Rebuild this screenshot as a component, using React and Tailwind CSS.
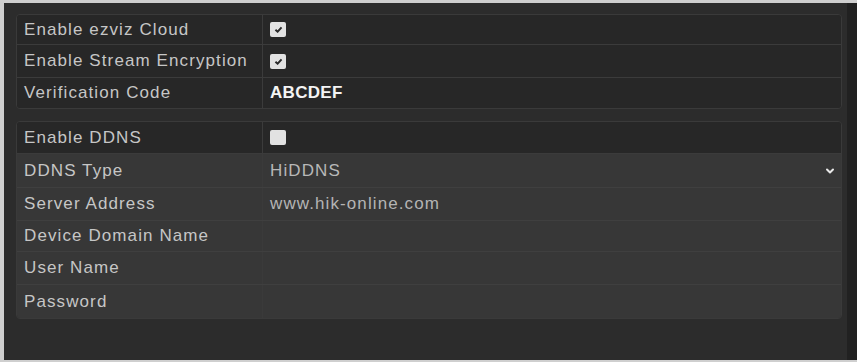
import { ChevronDown } from "lucide-react";

const Check = ({ checked }) => (
  <div className="w-[16px] h-[15px] bg-[#e2e2e2] rounded-[2px] flex items-center justify-center">
    {checked && (
      <svg width="9" height="7" viewBox="0 0 10 8">
        <path d="M1.5 4.2 L4 6.5 L8.5 1.5" fill="none" stroke="#2a2a2a" strokeWidth="2.2" />
      </svg>
    )}
  </div>
);

const Row = ({ label, children, h, dark, last }) => (
  <div
    className={`flex ${h} ${dark ? "bg-[#272727]" : "bg-[#373737]"} ${
      last ? "" : dark ? "border-b border-[#3b3b3b]" : "border-b border-[#3f3f3f]"
    }`}
  >
    <div
      className={`w-[246px] shrink-0 flex items-center pl-[7px] border-r ${
        dark ? "border-[#3b3b3b]" : "border-[#3a3a3a]"
      } text-[#c6c6c6]`}
    >
      {label}
    </div>
    <div className="flex-1 flex items-center pl-[7px] pr-[5px]">{children}</div>
  </div>
);

export default function App() {
  return (
    <div className="w-[857px] h-[362px] bg-[#cfcfcf] pt-[3px] pl-[4px] pb-[2px] flex text-[17px] leading-[20px] tracking-[1.1px] font-['Liberation_Sans',Arial,sans-serif]">
      <div className="w-[843px] bg-[#2c2c2c] pl-[12px] pt-[11px]">
        {/* cloud settings */}
        <div className="w-[826px] rounded-[4px] border border-[#3a3a3a] overflow-hidden">
          <Row label="Enable ezviz Cloud" h="h-[30px]" dark>
            <Check checked />
          </Row>
          <Row label="Enable Stream Encryption" h="h-[33px]" dark>
            <Check checked />
          </Row>
          <Row label="Verification Code" h="h-[30px]" dark last>
            <span className="text-[#f4f4f4] font-bold tracking-[0.3px]">ABCDEF</span>
          </Row>
        </div>

        {/* ddns settings */}
        <div className="w-[826px] mt-[12px] rounded-[4px] border border-[#3a3a3a] overflow-hidden">
          <Row label="Enable DDNS" h="h-[32px]" dark>
            <Check />
          </Row>
          <Row label="DDNS Type" h="h-[34px]">
            <span className="flex-1 text-[#b8b8b8]">HiDDNS</span>
            <ChevronDown size={12} strokeWidth={4} color="#e8e8e8" />
          </Row>
          <Row label="Server Address" h="h-[33px]">
            <span className="text-[#b4b4b4]">www.hik-online.com</span>
          </Row>
          <Row label="Device Domain Name" h="h-[31px]" />
          <Row label="User Name" h="h-[33px]" />
          <Row label="Password" h="h-[33px]" last />
        </div>
      </div>
      <div className="flex-1 bg-[#212121]" />
    </div>
  );
}
